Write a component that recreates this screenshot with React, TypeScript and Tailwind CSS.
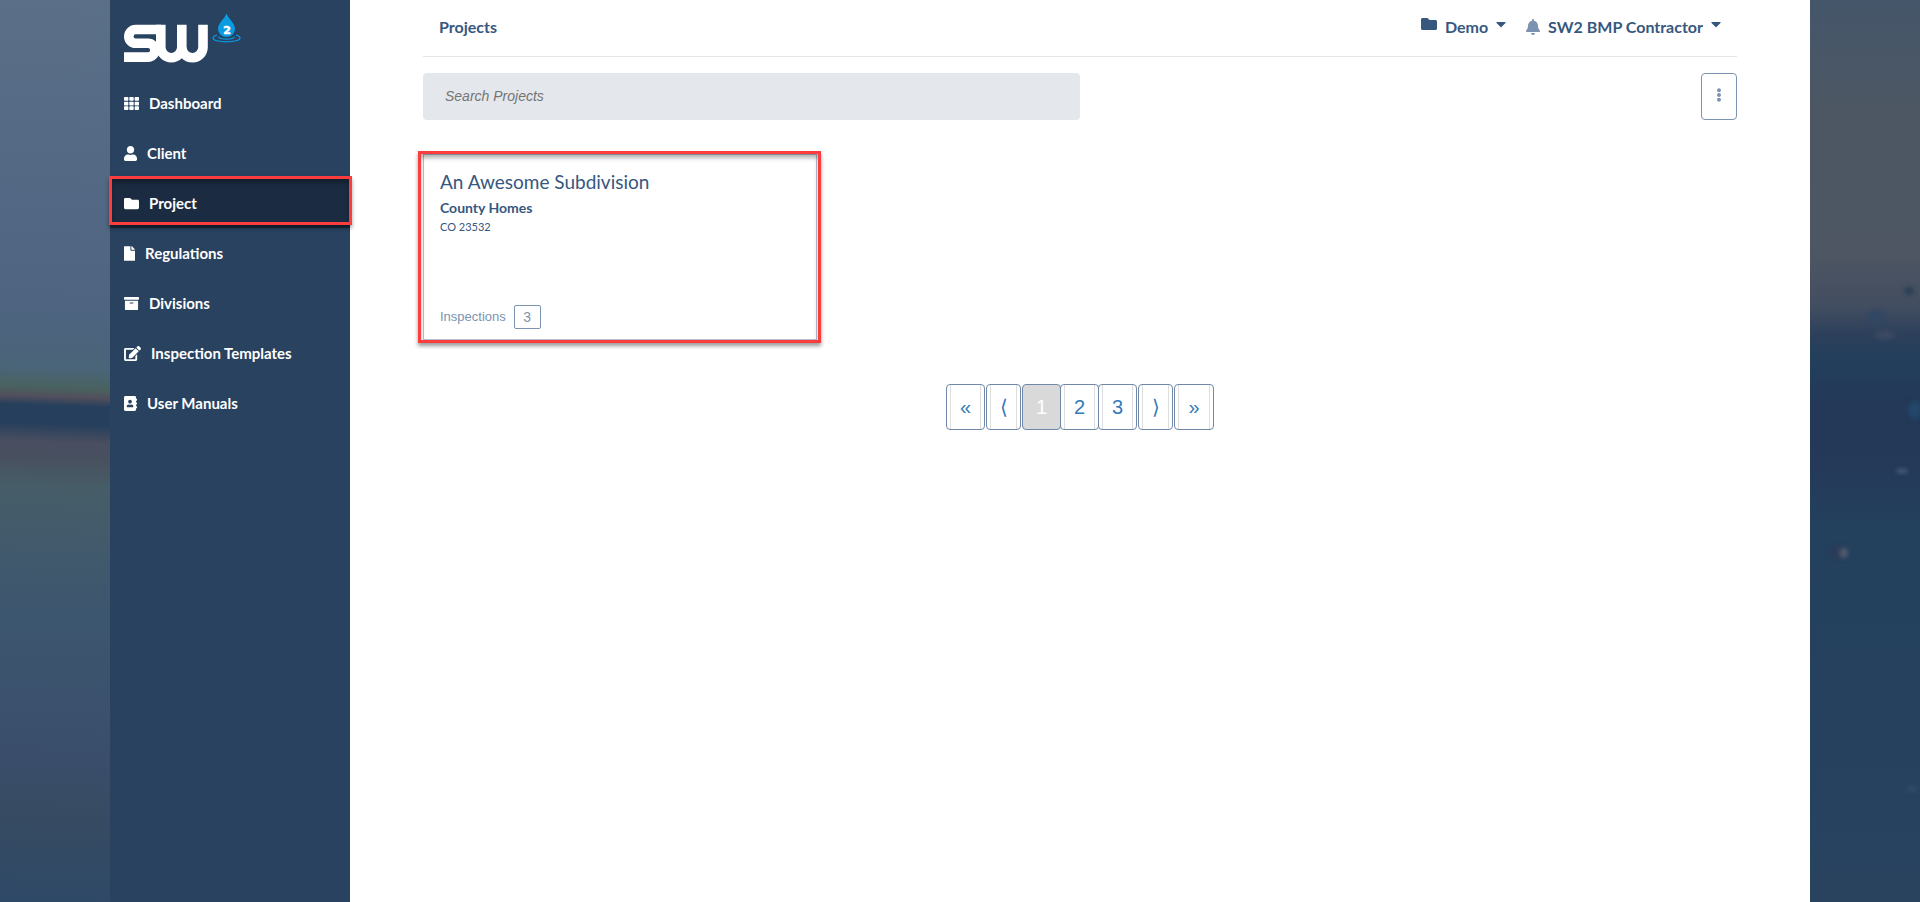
import React from 'react';
import {
  FaAddressBook,
  FaArchive,
  FaBell,
  FaCaretDown,
  FaEdit,
  FaEllipsisV,
  FaFile,
  FaFolder,
  FaTh,
  FaUser,
} from 'react-icons/fa';

const NAV_LINKS = [
  { label: 'Dashboard', icon: FaTh, iconClass: 'w-[15px]', active: false },
  { label: 'Client', icon: FaUser, iconClass: 'w-[13px]', active: false },
  { label: 'Project', icon: FaFolder, iconClass: 'w-[15px]', active: true },
  { label: 'Regulations', icon: FaFile, iconClass: 'w-[11px]', active: false },
  { label: 'Divisions', icon: FaArchive, iconClass: 'w-[15px]', active: false },
  { label: 'Inspection Templates', icon: FaEdit, iconClass: 'w-[17px]', active: false },
  { label: 'User Manuals', icon: FaAddressBook, iconClass: 'w-[13px]', active: false },
];

const PAGES = [
  { label: '«', name: 'First page', width: 'w-[39px] mr-px', current: false },
  { label: '⟨', name: 'Previous page', width: 'w-[35px] mr-px', current: false },
  { label: '1', name: 'Page 1', width: 'w-[39px]', current: true },
  { label: '2', name: 'Page 2', width: 'w-[39px] -ml-px', current: false },
  { label: '3', name: 'Page 3', width: 'w-[39px] -ml-px mr-px', current: false },
  { label: '⟩', name: 'Next page', width: 'w-[35px] mr-px', current: false },
  { label: '»', name: 'Last page', width: 'w-[40px]', current: false },
];

const Logo: React.FC = () => (
  <svg width="118" height="52" viewBox="0 0 118 52" role="img" aria-label="SW2">
    <g fill="none" stroke="#fff" strokeWidth="9.6">
      <path d="M36.800 16.500H11.700a6.900 6.900 0 0 0 0 13.800H24a6.900 6.900 0 0 1 0 13.800H0" />
      <path d="M36.800 11.700V34.200a10.500 10.500 0 0 0 21 0V11.700" />
      <path d="M57.800 34.200a10.600 10.600 0 0 0 21.200 0V11.700" />
    </g>
    <g fill="none" stroke="#0b9be3" strokeWidth="1.2">
      <path d="M93 22.200c-2.600.7-4 1.800-4 3 0 2 6 3.600 13.500 3.600s13.500-1.600 13.500-3.600c0-1.200-1.400-2.300-4-3" />
      <path d="M94.500 23.800c.8 1.600 4 2.400 8 2.400s7.200-.8 8-2.400" />
    </g>
    <path
      d="M102.500 .5c2 5.500 8.500 9.500 8.500 15.500a8.500 8 0 0 1-17 0c0-6 6.500-10 8.500-15.500z"
      fill="#0b9be3"
    />
    <text
      x="103"
      y="20.500"
      textAnchor="middle"
      fill="#fff"
      stroke="#fff"
      strokeWidth="0.6"
      fontSize="11"
      fontWeight="700"
      fontFamily="'DejaVu Sans', sans-serif"
    >
      2
    </text>
  </svg>
);

// Red frame drawn over whatever it highlights
const Highlight: React.FC<{ className: string }> = ({ className }) => (
  <span
    className={`pointer-events-none absolute border-3 border-[#fc3d3d] shadow-[0_3px_4px_rgba(0,0,0,0.4),inset_0_4px_4px_rgba(0,0,0,0.3)] ${className}`}
  />
);

const Sidebar: React.FC = () => (
  <aside className="w-60 shrink-0 bg-[#28425f]">
    <a href="#home" className="block h-[78px] pl-3.5 pt-[13px]">
      <Logo />
    </a>
    <nav>
      <ul>
        {NAV_LINKS.map(({ label, icon: Icon, iconClass, active }) => (
          <li key={label}>
            <a
              href={`#${label}`}
              className={`relative flex h-[50px] items-center gap-2.5 pl-3.5 text-[15px] font-bold text-white ${
                active ? 'bg-[#1b2c42]' : ''
              }`}
            >
              <Icon className={`h-[15px] ${iconClass}`} />
              {label}
              {active && <Highlight className="-left-px -right-0.5 -top-0.5 bottom-[3px]" />}
            </a>
          </li>
        ))}
      </ul>
    </nav>
  </aside>
);

const Header: React.FC = () => (
  <header className="flex h-[57px] items-center justify-between border-b border-[#e4e6e9] px-4 pb-0.5 text-base font-bold text-[#36587f]">
    <h1>Projects</h1>
    <div className="flex items-center">
      <button className="flex items-center">
        <FaFolder className="mb-1.5 mr-2 size-4" />
        Demo
        <FaCaretDown className="mb-1.5 ml-2 h-4 w-2.5" />
      </button>
      <button aria-label="Notifications" className="ml-5 mr-2 text-[#7b93b1]">
        <FaBell className="h-4 w-3.5" />
      </button>
      <button className="flex items-center">
        SW2 BMP Contractor
        <FaCaretDown className="mb-1.5 ml-2 h-4 w-2.5" />
      </button>
    </div>
  </header>
);

const ProjectCard: React.FC = () => (
  <a
    href="#project"
    className="relative mt-[34px] flex h-[186px] w-[30%] flex-col justify-between border border-[#b4c1d0] px-4 pb-[10px] pt-[15px] text-[#36587f]"
  >
    <div>
      <h2 className="text-[19px] leading-6">An Awesome Subdivision</h2>
      <p className="mt-0.5 text-sm font-bold leading-6">County Homes</p>
      <p className="text-[11px] leading-[14px]">CO 23532</p>
    </div>
    <div className="flex items-center gap-2 font-['Liberation_Sans',sans-serif] text-[13px] text-[#7b93b1]">
      Inspections
      <span className="flex h-6 w-[27px] items-center justify-center rounded-xs border border-[#7b93b1] text-sm">
        3
      </span>
    </div>
    <Highlight className="-left-1.5 -right-[5px] -top-1 -bottom-1" />
  </a>
);

const Pagination: React.FC = () => (
  <nav
    aria-label="Pagination"
    className="mt-11 flex justify-center font-['Liberation_Sans',sans-serif] text-xl text-[#337ab7]"
  >
    {PAGES.map(({ label, name, width, current }) => (
      <button
        key={name}
        aria-label={name}
        className={`h-[46px] rounded-sm border border-[#7089a9] px-[3px] ${width} ${
          current ? 'bg-[#d9d9d9] text-white' : ''
        }`}
      >
        <span
          className={`flex h-full items-center justify-center ${
            current ? '' : 'border-x border-[#dddddd]'
          }`}
        >
          {label}
        </span>
      </button>
    ))}
  </nav>
);

// Rain drops on the window behind the page
const Droplets: React.FC = () => (
  <svg width="110" height="902" viewBox="0 0 110 902" className="max-w-full" aria-hidden="true">
    <defs>
      <filter id="soft" x="-50%" y="-50%" width="200%" height="200%">
        <feGaussianBlur stdDeviation="2" />
      </filter>
    </defs>
    <g filter="url(#soft)">
      <ellipse cx="66" cy="318" rx="9" ry="8" fill="#324663" />
      <ellipse cx="75" cy="335" rx="11" ry="4" fill="#3c4a62" />
      <ellipse cx="99" cy="291" rx="5" ry="4" fill="#293c55" />
      <ellipse cx="105" cy="410" rx="7" ry="9" fill="#24466a" />
      <ellipse cx="28" cy="552" rx="9" ry="7" fill="#2b3b58" />
      <ellipse cx="34" cy="553" rx="4" ry="5" fill="#535c70" />
      <ellipse cx="92" cy="471" rx="6" ry="2" fill="#4d6079" />
      <ellipse cx="102" cy="789" rx="6" ry="2" fill="#35506d" />
    </g>
  </svg>
);

const App: React.FC = () => {
  return (
    <div className="flex min-h-screen font-['Lato',sans-serif]">
      <div className="flex-1 bg-[linear-gradient(182deg,#5b6f88_0%,#4e6481_34%,#4a6478_41%,#49625f_43%,#514f5c_44%,#263f5c_45%,#263f5c_47%,#494e60_49%,#485160_51%,#465d68_54%,#3d566f_68%,#3a4e6c_84%,#374b62_90%,#2e4967_100%)]" />
      <div className="flex w-full max-w-[1700px] shrink-0">
        <Sidebar />
        <main className="flex-1 bg-white">
          <div className="mx-auto w-[90%]">
            <Header />
            <div className="mt-4 flex justify-between">
              <input
                type="search"
                aria-label="Search Projects"
                placeholder="Search Projects"
                className="h-[47px] w-1/2 rounded-sm bg-[#e4e7eb] px-[22px] pb-0.5 font-['Liberation_Sans',sans-serif] text-sm italic placeholder:text-[#757575]"
              />
              <button
                aria-label="More options"
                className="flex h-[47px] w-9 items-center justify-center rounded-sm border border-[#7b93b1] pb-1 text-[#7b93b1]"
              >
                <FaEllipsisV size={14} />
              </button>
            </div>
            <ProjectCard />
            <Pagination />
          </div>
        </main>
      </div>
      <div className="flex-1 bg-[linear-gradient(180deg,#45566a_0%,#4c5763_12%,#4e5663_28%,#424d60_34%,#2d405b_37%,#223f5b_40%,#243858_45%,#243a58_52%,#23405d_58%,#25415e_80%,#29435f_100%)]">
        <Droplets />
      </div>
    </div>
  );
};

export default App;
